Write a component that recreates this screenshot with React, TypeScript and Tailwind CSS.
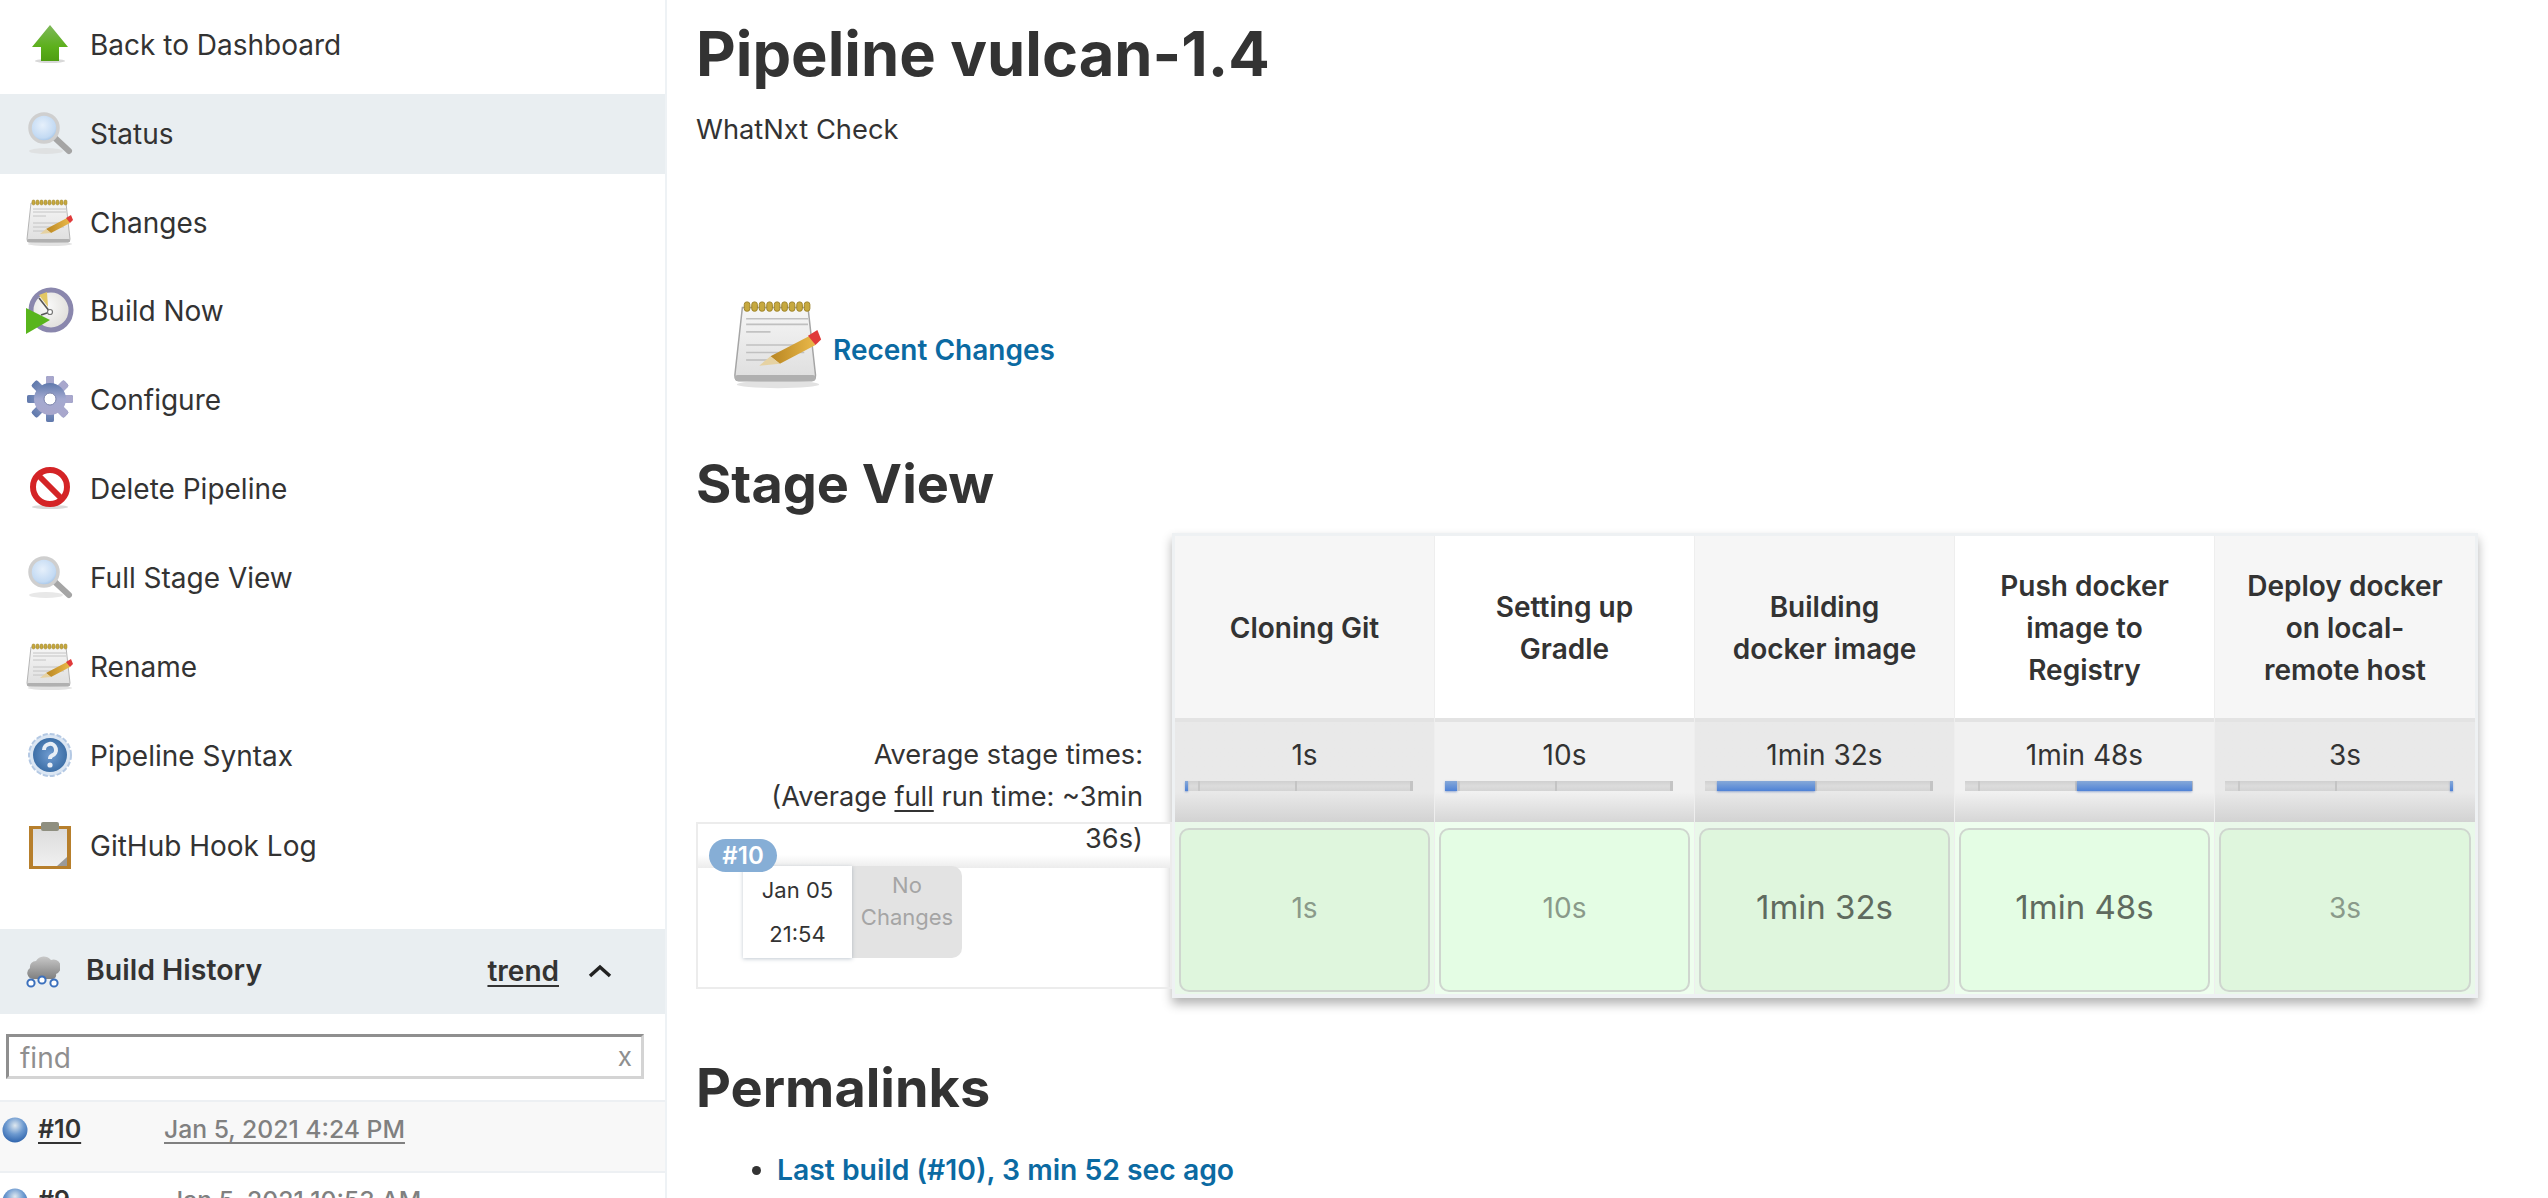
import React from "react";

function ArrowIcon() {
  return (
    <svg viewBox="0 0 48 48" className="w-12 h-12 shrink-0">
      <defs>
        <linearGradient id="arrowGreen" x1="0" y1="0" x2="0" y2="1">
          <stop offset="0" stopColor="#7fb85a" />
          <stop offset="0.6" stopColor="#5cb01c" />
          <stop offset="1" stopColor="#4f9e12" />
        </linearGradient>
      </defs>
      <ellipse cx="24" cy="40" rx="15" ry="2" fill="#d8d8d8" />
      <polygon points="24,4 42,26 33,26 33,40 15,40 15,26 6,26" fill="url(#arrowGreen)" />
    </svg>
  );
}

function SearchIcon() {
  return (
    <svg viewBox="0 0 48 48" className="w-12 h-12 shrink-0">
      <defs>
        <radialGradient id="lens" cx="0.45" cy="0.4" r="0.65">
          <stop offset="0" stopColor="#e6f0fb" />
          <stop offset="0.7" stopColor="#c3daf3" />
          <stop offset="1" stopColor="#8fb6e0" />
        </radialGradient>
      </defs>
      <ellipse cx="20" cy="41" rx="17" ry="3" fill="#d9d9d9" opacity="0.6" />
      <line x1="29" y1="28" x2="43" y2="41" stroke="#a5a5a5" strokeWidth="6" strokeLinecap="round" />
      <circle cx="18" cy="18" r="14" fill="url(#lens)" stroke="#cfcfcf" strokeWidth="3.5" />
    </svg>
  );
}

function NotepadIcon({ className }: { className: string }) {
  const rings = [6, 10, 14, 18, 22, 26, 30, 34, 38];
  return (
    <svg viewBox="0 0 48 48" className={className}>
      <defs>
        <linearGradient id="paper" x1="0" y1="0" x2="0" y2="1">
          <stop offset="0" stopColor="#f6f6f6" />
          <stop offset="1" stopColor="#dedede" />
        </linearGradient>
        <linearGradient id="pencil" x1="0" y1="0" x2="1" y2="0">
          <stop offset="0" stopColor="#b98622" />
          <stop offset="1" stopColor="#eab94a" />
        </linearGradient>
      </defs>
      <ellipse cx="24" cy="45" rx="22" ry="2" fill="#e2e2e2" />
      <path d="M5 4 H40 L44 40 Q44 43 42 43 H3 Q1 43 1 40 Z" fill="url(#paper)" stroke="#a5a5a5" strokeWidth="0.8" />
      <rect x="1" y="40" width="43" height="3.2" rx="1.5" fill="#b0b0b0" />
      {rings.map((x) => (
        <rect key={x} x={x} y="1" width="3" height="5" rx="1.4" fill="#c7a93f" stroke="#9b8128" strokeWidth="0.5" />
      ))}
      <g stroke="#c0c0c0" strokeWidth="0.9">
        <line x1="7" y1="10" x2="40" y2="10" />
        <line x1="7" y1="13" x2="40" y2="13" />
        <line x1="7" y1="17" x2="20" y2="17" />
        <line x1="7" y1="24" x2="38" y2="24" />
        <line x1="7" y1="28" x2="38" y2="28" />
        <line x1="7" y1="32" x2="20" y2="32" />
      </g>
      <polygon points="20,30 41,19 44,24 25,34" fill="url(#pencil)" />
      <polygon points="14,35 20,30 25,34" fill="#e6d2a2" />
      <polygon points="40,19 45,16 47,21 44,24" fill="#e03a3a" />
    </svg>
  );
}

function ClockIcon() {
  return (
    <svg viewBox="0 0 48 48" className="w-12 h-12 shrink-0">
      <defs>
        <radialGradient id="clockFace" cx="0.4" cy="0.4" r="0.7">
          <stop offset="0" stopColor="#fafafa" />
          <stop offset="1" stopColor="#dcdad6" />
        </radialGradient>
      </defs>
      <circle cx="25" cy="23" r="20" fill="url(#clockFace)" stroke="#8a87ad" strokeWidth="5" />
      <polygon points="13,8 21,5 22,20" fill="#e3c765" />
      <line x1="24" y1="25" x2="13" y2="11" stroke="#555" strokeWidth="1.6" />
      <line x1="24" y1="25" x2="15" y2="28" stroke="#555" strokeWidth="1.6" />
      <circle cx="24" cy="25" r="2.5" fill="#fff" stroke="#777" strokeWidth="1.2" />
      <polygon points="0,21 24,33 0,47" fill="#58b51c" />
    </svg>
  );
}

function GearIcon() {
  const teeth = [0, 45, 90, 135, 180, 225, 270, 315];
  return (
    <svg viewBox="0 0 48 48" className="w-12 h-12 shrink-0">
      <defs>
        <linearGradient id="gearFill" x1="0" y1="0" x2="0" y2="1">
          <stop offset="0" stopColor="#5f79ac" />
          <stop offset="0.5" stopColor="#a3a9d0" />
          <stop offset="1" stopColor="#a9a7cc" />
        </linearGradient>
      </defs>
      <g fill="url(#gearFill)">
        {teeth.map((angle) => (
          <rect key={angle} x="20" y="0" width="8" height="46" rx="2" transform={`rotate(${angle} 24 23)`} />
        ))}
        <circle cx="24" cy="23" r="16" />
      </g>
      <circle cx="24" cy="23" r="6" fill="#fff" stroke="#7c84ab" strokeWidth="1" />
    </svg>
  );
}

function DeleteIcon() {
  return (
    <svg viewBox="0 0 48 48" className="w-12 h-12 shrink-0">
      <ellipse cx="24" cy="42" rx="18" ry="2" fill="#d9d9d9" />
      <circle cx="24" cy="22" r="17" fill="#fff" stroke="#d42426" strokeWidth="6" />
      <line x1="12" y1="10" x2="36" y2="34" stroke="#d42426" strokeWidth="6" />
    </svg>
  );
}

function HelpIcon() {
  return (
    <svg viewBox="0 0 48 48" className="w-12 h-12 shrink-0">
      <defs>
        <radialGradient id="helpBlue" cx="0.5" cy="0.5" r="0.6">
          <stop offset="0" stopColor="#6f9bd0" />
          <stop offset="1" stopColor="#34679f" />
        </radialGradient>
      </defs>
      <circle cx="24" cy="23" r="21" fill="#dbe6f3" stroke="#b4c9e4" strokeWidth="2" strokeDasharray="5 2" />
      <circle cx="24" cy="23" r="17" fill="url(#helpBlue)" />
      <path d="M18 18 A6 6 0 1 1 26 23.5 Q24 24.5 24 27" fill="none" stroke="#e8eef6" strokeWidth="4" />
      <circle cx="24" cy="33" r="2.6" fill="#e8eef6" />
    </svg>
  );
}

function ClipboardIcon() {
  return (
    <svg viewBox="0 0 48 48" className="w-12 h-12 shrink-0">
      <defs>
        <linearGradient id="clipPaper" x1="0" y1="0" x2="0" y2="1">
          <stop offset="0" stopColor="#dcdcdc" />
          <stop offset="1" stopColor="#f0f0f0" />
        </linearGradient>
      </defs>
      <rect x="3" y="4" width="42" height="43" fill="#b77f2c" />
      <rect x="7" y="7" width="34" height="37" fill="url(#clipPaper)" />
      <polygon points="41,35 41,44 31,44" fill="#9a9a9a" />
      <rect x="15" y="0" width="18" height="9" rx="2" fill="#8f8f80" />
    </svg>
  );
}

function CloudIcon() {
  return (
    <svg viewBox="0 0 34 34" className="w-[34px] h-[34px] shrink-0">
      <defs>
        <linearGradient id="cloudGray" x1="0" y1="0" x2="0" y2="1">
          <stop offset="0" stopColor="#c8c8c8" />
          <stop offset="1" stopColor="#808080" />
        </linearGradient>
      </defs>
      <path d="M7 25 A6 6 0 0 1 4 14 A6 6 0 0 1 10 7 A9 9 0 0 1 25 6 A7 7 0 0 1 30 20 A4 4 0 0 1 27 25 Z" fill="url(#cloudGray)" />
      <g fill="#fff" stroke="#3b70bd" strokeWidth="2">
        <circle cx="5" cy="29" r="3.6" />
        <circle cx="16" cy="26" r="3.6" />
        <circle cx="28" cy="29" r="3.6" />
      </g>
    </svg>
  );
}

function BlueBall() {
  return (
    <svg viewBox="0 0 26 26" className="w-[26px] h-[26px] shrink-0 mt-[4px]">
      <defs>
        <radialGradient id="ball" cx="0.5" cy="0.32" r="0.7">
          <stop offset="0" stopColor="#dfe8ef" />
          <stop offset="0.5" stopColor="#6d9ad0" />
          <stop offset="1" stopColor="#2c62ac" />
        </radialGradient>
      </defs>
      <circle cx="13" cy="13" r="12.5" fill="url(#ball)" />
    </svg>
  );
}

const tasks = [
  { label: "Back to Dashboard", icon: <ArrowIcon /> },
  { label: "Status", icon: <SearchIcon />, active: true },
  { label: "Changes", icon: <NotepadIcon className="w-12 h-12 shrink-0" /> },
  { label: "Build Now", icon: <ClockIcon /> },
  { label: "Configure", icon: <GearIcon /> },
  { label: "Delete Pipeline", icon: <DeleteIcon /> },
  { label: "Full Stage View", icon: <SearchIcon /> },
  { label: "Rename", icon: <NotepadIcon className="w-12 h-12 shrink-0" /> },
  { label: "Pipeline Syntax", icon: <HelpIcon />, nudge: true },
  { label: "GitHub Hook Log", icon: <ClipboardIcon />, nudge: true },
];

// offset and width of the blue piece of each stage's bar, in px of 228
const stages = [
  { name: "Cloning Git", time: "1s", left: 0, width: 3, big: false },
  { name: "Setting up Gradle", time: "10s", left: 0, width: 12, big: false },
  { name: "Building docker image", time: "1min 32s", left: 12, width: 98, big: true },
  { name: "Push docker image to Registry", time: "1min 48s", left: 112, width: 115, big: true },
  { name: "Deploy docker on local-remote host", time: "3s", left: 225, width: 3, big: false },
];

function Sidebar() {
  return (
    <aside className="w-[667px] shrink-0 border-r-2 border-[#eef2f5] h-[1198px] overflow-hidden">
      <div className="pt-[5px] flex flex-col gap-[8.8px]">
        {tasks.map((task) => (
          <div
            key={task.label}
            className={
              "h-[80px] flex items-center pl-[26px] gap-[16px] " +
              (task.active ? "bg-[#e9eef1] " : "") +
              (task.nudge ? "mt-[1px]" : "")
            }
          >
            {task.icon}
            <span className="text-[28px] text-[#333]">{task.label}</span>
          </div>
        ))}
      </div>
      <div className="mt-[43px] h-[85px] bg-[#e9eef1] flex items-center pl-[26px] pr-[53px] pb-[2px]">
        <CloudIcon />
        <span className="ml-[26px] text-[28.5px] font-semibold text-[#333]">Build History</span>
        <a className="ml-auto text-[28px] font-semibold text-[#333] underline decoration-2 underline-offset-4">trend</a>
        <svg viewBox="0 0 24 14" className="ml-[29px] w-[24px] h-[14px]">
          <path d="M2 12 L12 3 L22 12" fill="none" stroke="#222" strokeWidth="3.5" />
        </svg>
      </div>
      <div className="mt-[20px] mx-[6px] w-[638px] h-[45px] border-[3px] border-t-[#8f8f8f] border-l-[#8f8f8f] border-r-[#d4d4d4] border-b-[#d4d4d4] flex items-center justify-between pl-[11px] pr-[9px]">
        <span className="text-[28px] text-[#8f8f8f] mt-[2px]">find</span>
        <span className="text-[26px] text-[#8f8f8f]">x</span>
      </div>
      <div className="mt-[21px] h-[73px] border-y-2 border-[#edf0f3] bg-[#f8f8f8] flex pt-[11px] pl-[2px]">
        <BlueBall />
        <a className="ml-[10px] w-[126px] text-[25px] leading-[32px] font-semibold text-[#333] underline underline-offset-4">#10</a>
        <span className="text-[24.7px] leading-[32px] font-medium text-[#808080] underline underline-offset-4">Jan 5, 2021 4:24 PM</span>
      </div>
      <div className="h-[73px] flex pt-[11px] pl-[2px]">
        <BlueBall />
        <a className="ml-[10px] w-[131px] text-[25px] leading-[32px] font-semibold text-[#333] underline underline-offset-4">#9</a>
        <span className="text-[24.7px] leading-[32px] font-medium text-[#808080] underline underline-offset-4">Jan 5, 2021 10:53 AM</span>
      </div>
    </aside>
  );
}

function StageColumn({ stage, index }: { stage: (typeof stages)[number]; index: number }) {
  const odd = index % 2 === 0;
  return (
    <div className="w-[260px] flex flex-col border-r border-[#eeeeee] last:border-r-0">
      <div className={odd ? "h-[182px] pt-[2px] bg-[#f6f6f6] flex items-center justify-center" : "h-[182px] pt-[2px] bg-white flex items-center justify-center"}>
        <div className="w-[204px] text-center text-[28px] leading-[42px] font-semibold text-[#333]">{stage.name}</div>
      </div>
      <div
        className={
          odd
            ? "h-[104px] border-t-4 border-[#e3e3e3] bg-gradient-to-b from-[#e9e9e9] from-70% to-[#d2d2d2] flex flex-col"
            : "h-[104px] border-t-4 border-[#e3e3e3] bg-gradient-to-b from-[#f1f1f1] from-70% to-[#d6d6d6] flex flex-col"
        }
      >
        <div className="mt-[15px] h-[36px] leading-[36px] text-center text-[28px] text-[#333]">{stage.time}</div>
        <div className="relative mt-[8px] ml-[10px] w-[228px] h-[10px] bg-gradient-to-b from-[#d0d0d0] via-[#dcdcdc] to-[#d4d4d4]">
          <div className="absolute left-[13px] top-0 bottom-0 w-[2px] bg-[#c8c8c8]" />
          <div className="absolute left-[110px] top-0 bottom-0 w-[2px] bg-[#c4c4c4]" />
          <div className="absolute right-0 top-0 bottom-0 w-[3px] bg-[#c4c4c4]" />
          <div
            className="absolute top-0 bottom-0 bg-gradient-to-b from-[#86a8d8] to-[#4f82d6] shadow-[0_1px_2px_rgba(60,100,180,0.5)]"
            style={{ left: stage.left, width: stage.width }}
          />
        </div>
      </div>
      <div className={odd ? "h-[172px] bg-[#e9f8e9] pt-[6px] pb-[2px] px-[4px]" : "h-[172px] bg-[#eefeee] pt-[6px] pb-[2px] px-[4px]"}>
        <div
          className={
            (odd ? "bg-[#dff6dd]" : "bg-[#e4fde4]") +
            " h-full rounded-[10px] border-2 border-[#cfd6cf] pb-[5px] flex items-center justify-center"
          }
        >
          <span className={stage.big ? "text-[33px] text-[#5f6b5f]" : "text-[28px] text-[#8a9a8a]"}>{stage.time}</span>
        </div>
      </div>
    </div>
  );
}

function StageView() {
  return (
    <div className="flex items-start mt-[9px]">
      <div className="w-[476px] shrink-0 pt-[201px]">
        <div className="relative z-10 ml-auto mr-[29px] w-[400px] text-right text-[27.2px] leading-[42px] text-[#333]">
          Average stage times:
          <br />
          (Average <span className="underline underline-offset-4">full</span> run time: ~3min 36s)
        </div>
        <div className="relative -mt-[38px] h-[167px] border-2 border-[#ececec]">
          <div className="h-[44px] bg-gradient-to-b from-white from-70% to-[#ececec]" />
          <div className="absolute left-[11px] top-[15px] z-20 w-[68px] h-[33px] rounded-full bg-[#86aed6] flex items-center justify-center text-[24px] font-semibold text-white">
            #10
          </div>
          <div className="flex ml-[45px] -mt-[2px]">
            <div className="w-[109px] h-[92px] bg-white shadow-[0_1px_4px_rgba(100,120,140,0.4)] flex flex-col items-center justify-center text-[22px] leading-[44px] text-[#333] relative">
              <span>Jan 05</span>
              <span>21:54</span>
            </div>
            <div className="w-[110px] h-[92px] bg-[#e3e3e3] rounded-r-[10px] flex flex-col items-center text-center text-[22px] leading-[32px] text-[#a5a5a5] pt-[3px]">
              <span>No</span>
              <span>Changes</span>
            </div>
          </div>
        </div>
      </div>
      <div className="flex shrink-0 p-[3px] pb-[4px] bg-[#eef1f3] shadow-[0_6px_10px_rgba(0,0,0,0.3)]">
        {stages.map((stage, index) => (
          <StageColumn key={stage.name} stage={stage} index={index} />
        ))}
      </div>
    </div>
  );
}

export default function App() {
  return (
    <div className="flex w-[2548px] h-[1198px] overflow-hidden bg-white text-[#333] [font-family:Inter,sans-serif]">
      <Sidebar />
      <main className="pl-[29px] flex-1 min-w-0">
        <h1 className="h-[108px] leading-[108px] text-[61.4px] font-bold">Pipeline vulcan-1.4</h1>
        <p className="h-[42px] leading-[42px] text-[27.3px] pt-[1px]">WhatNxt Check</p>
        <div className="mt-[150px] ml-[37px] h-[90px] flex items-center gap-[10px]">
          <NotepadIcon className="w-[90px] h-[90px] shrink-0" />
          <a className="text-[28px] font-semibold text-[#0b6aa2] mt-[9px]">Recent Changes</a>
        </div>
        <h2 className="mt-[54px] h-[80px] leading-[80px] text-[54px] font-bold">Stage View</h2>
        <StageView />
        <h2 className="mt-[50px] h-[80px] leading-[80px] text-[54px] font-bold">Permalinks</h2>
        <ul className="mt-[22px] pl-[81px] list-disc">
          <li className="h-[40px] leading-[40px] text-[28.3px] font-semibold text-[#0b6aa2] marker:text-[#333]">
            Last build (#10), 3 min 52 sec ago
          </li>
        </ul>
      </main>
    </div>
  );
}
